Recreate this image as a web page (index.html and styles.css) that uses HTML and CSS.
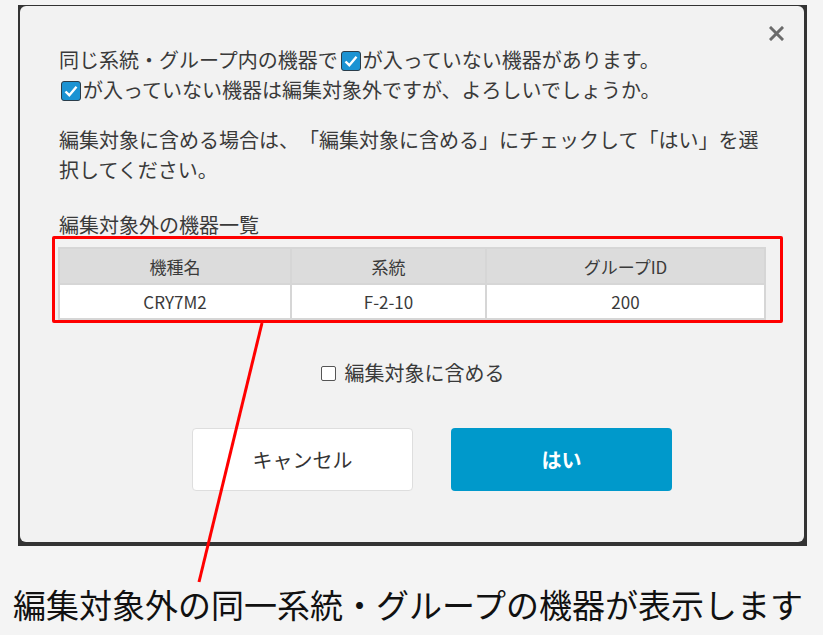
FILE: index.html
```html
<!DOCTYPE html>
<html lang="ja">
<head>
<meta charset="UTF-8">
<title>編集対象外の機器</title>
<link rel="stylesheet" href="styles.css">
</head>
<body>

<div class="page">
  <div class="dialog-frame">
    <div class="dialog">
      <button class="btn-close" aria-label="閉じる">
        <svg width="15" height="15" viewBox="0 0 15 15"><path d="M2 2 L13 13 M13 2 L2 13" stroke="#6b6b6b" stroke-width="3" stroke-linecap="square"/></svg>
      </button>

      <p class="msg">
        同じ系統・グループ内の機器で<span class="chk-icon"><svg width="20" height="20" viewBox="0 0 20 20"><rect x="0.5" y="0.5" width="19" height="19" rx="2.5" fill="#1b93d3" stroke="#2b3d4a"/><path d="M4.5 10.5 L8.3 14.2 L15.5 5.8" fill="none" stroke="#fff" stroke-width="2.4"/></svg></span>が入っていない機器があります。<br>
        <span class="chk-icon"><svg width="20" height="20" viewBox="0 0 20 20"><rect x="0.5" y="0.5" width="19" height="19" rx="2.5" fill="#1b93d3" stroke="#2b3d4a"/><path d="M4.5 10.5 L8.3 14.2 L15.5 5.8" fill="none" stroke="#fff" stroke-width="2.4"/></svg></span>が入っていない機器は編集対象外ですが、よろしいでしょうか。
      </p>

      <p class="msg">
        編集対象に含める場合は、「編集対象に含める」にチェックして「はい」を選択してください。
      </p>

      <p class="list-title">編集対象外の機器一覧</p>

      <table class="device-table">
        <thead>
          <tr>
            <th class="col-model">機種名</th>
            <th class="col-line">系統</th>
            <th class="col-group">グループID</th>
          </tr>
        </thead>
        <tbody>
          <tr>
            <td>CRY7M2</td>
            <td>F-2-10</td>
            <td>200</td>
          </tr>
        </tbody>
      </table>

      <label class="include-label">
        <span class="box"></span>編集対象に含める
      </label>

      <div class="actions">
        <button class="btn btn-cancel">キャンセル</button>
        <button class="btn btn-ok">はい</button>
      </div>
    </div>
  </div>

  <p class="caption">編集対象外の同一系統・グループの機器が表示します</p>

  <!-- 注釈（赤枠と引き出し線） -->
  <div class="note-box"></div>
  <svg class="note-line" width="823" height="635" viewBox="0 0 823 635">
    <line x1="262" y1="323" x2="199" y2="582" stroke="#ff0000" stroke-width="3"/>
  </svg>
</div>

</body>
</html>
```

FILE: styles.css
```css
  body {
    margin: 0;
    padding: 0;
    background-color: #f4f4f4;
    font-family: "Noto Sans CJK JP", "Noto Sans", sans-serif;
    color: #333;
    text-spacing-trim: space-all;
  }
  .page {
    position: relative;
    width: 823px;
    height: 635px;
    padding: 5px 0 0 18px;
    box-sizing: border-box;
  }
  .dialog-frame {
    width: 789px;
    background-color: #333;
    padding: 1px 3px 4px 2px;
    box-sizing: border-box;
  }
  .dialog {
    position: relative;
    background-color: #f2f2f2;
    border-radius: 6px;
    padding: 39px 38px 51px 39px;
    height: 536px;
    box-sizing: border-box;
  }
  .btn-close {
    position: absolute;
    top: 20px;
    right: 20px;
    border: none;
    background: none;
    padding: 0;
    width: 15px;
    height: 15px;
    cursor: pointer;
  }
  .btn-close svg {
    display: block;
  }
  .msg {
    margin: 0 0 20px 0;
    font-size: 20px;
    line-height: 30px;
    color: #3a3a3a;
  }
  .chk-icon {
    display: inline-block;
    width: 20px;
    height: 20px;
    margin: 0 2px 0 2px;
    vertical-align: -3px;
  }
  .chk-icon svg {
    display: block;
  }
  .msg .chk-icon:first-child {
    margin-left: 3px;
  }
  .list-title {
    margin: 25px 0 7px 0;
    font-size: 20px;
    line-height: 30px;
    color: #3a3a3a;
  }
  .device-table {
    width: 708px;
    margin-left: -1px;
    border-collapse: collapse;
    font-size: 17px;
    color: #3a3a3a;
  }
  .device-table th,
  .device-table td {
    border: 2px solid #d6d6d6;
    text-align: center;
    font-weight: normal;
    padding: 0;
  }
  .device-table th {
    background-color: #dcdcdc;
    height: 34px;
  }
  .device-table td {
    background-color: #fff;
    height: 33px;
  }
  .col-model { width: 230px; }
  .col-line { width: 193px; }
  .include-label {
    display: flex;
    justify-content: center;
    align-items: center;
    margin-top: 38px;
    font-size: 20px;
    line-height: 30px;
    color: #3a3a3a;
  }
  .include-label .box {
    width: 13px;
    height: 13px;
    border: 1px solid #555;
    border-radius: 2px;
    background-color: #fff;
    margin-right: 9px;
  }
  .actions {
    display: flex;
    justify-content: center;
    gap: 38px;
    margin-top: 40px;
    padding-left: 39px;
  }
  .btn {
    width: 221px;
    height: 63px;
    border-radius: 4px;
    font-family: "Noto Sans CJK JP", "Noto Sans", sans-serif;
    font-size: 20px;
    cursor: pointer;
  }
  .btn-cancel {
    background-color: #fff;
    border: 1px solid #dedede;
    color: #333;
  }
  .btn-ok {
    background-color: #0099cb;
    border: none;
    color: #fff;
    font-weight: bold;
  }
  .caption {
    margin: 38px 0 0 -5px;
    font-size: 33px;
    line-height: 40px;
    color: #111;
    white-space: nowrap;
  }
  .note-box {
    position: absolute;
    left: 52px;
    top: 236px;
    width: 731px;
    height: 87px;
    border: 3px solid #ff0000;
    border-radius: 2px;
    box-sizing: border-box;
  }
  .note-line {
    position: absolute;
    left: 0;
    top: 0;
    pointer-events: none;
  }
```
